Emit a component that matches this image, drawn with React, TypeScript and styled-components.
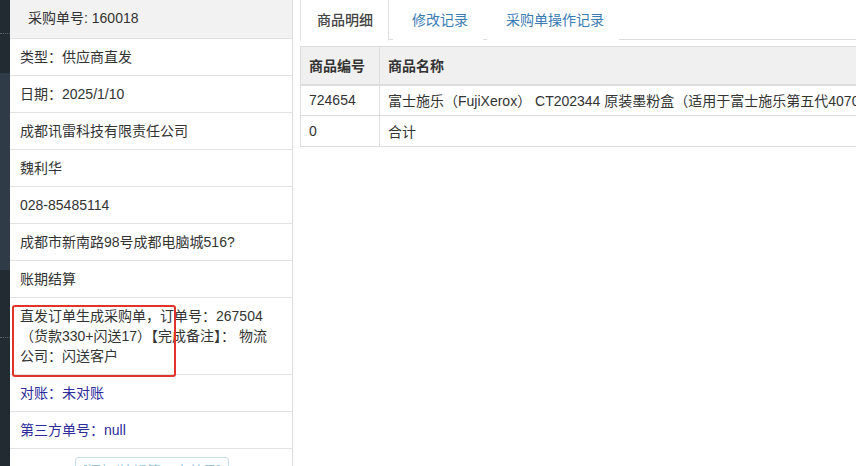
import React from "react";
import styled, { createGlobalStyle } from "styled-components";

const Global = createGlobalStyle`
  html, body { margin: 0; padding: 0; background: #fff; overflow: hidden; }
  body { font-family: "Liberation Sans", Arial, "Noto Sans CJK SC", sans-serif; font-size: 14px; color: #333; }
  * { box-sizing: border-box; }
`;

const Page = styled.div`
  display: flex;
  width: 856px;
  height: 466px;
  overflow: hidden;
`;

const Strip = styled.div`
  width: 10px;
  flex: none;
  display: flex;
  flex-direction: column;
`;

const StripSection = styled.div<{ $h?: number; $tone: "dark" | "slate"; $dotAt?: number }>`
  position: relative;
  height: ${(p) => (p.$h ? `${p.$h}px` : "auto")};
  flex: ${(p) => (p.$h ? "none" : "1")};
  background: ${(p) => (p.$tone === "dark" ? "#222a32" : "#2f3b47")};
  &::after {
    content: "";
    display: ${(p) => (p.$dotAt ? "block" : "none")};
    position: absolute;
    left: 0;
    right: 0;
    top: ${(p) => p.$dotAt || 0}px;
    border-top: 1px dotted #5a636c;
  }
`;

const LeftPanel = styled.div`
  position: relative;
  width: 283px;
  flex: none;
  border-right: 1px solid #dcdcdc;
  display: flex;
  flex-direction: column;
`;

const HeadRow = styled.div`
  flex: none;
  height: 39px;
  background: #f2f2f2;
  border-bottom: 1px solid #e2e2e2;
  padding: 0 18px 2px;
  display: flex;
  align-items: center;
  line-height: 20px;
`;

const InfoRow = styled.div<{ $blue?: boolean }>`
  flex: none;
  padding: 8px 10px 8px 10px;
  line-height: 20px;
  border-bottom: 1px solid #e2e2e2;
  color: ${(p) => (p.$blue ? "#2b2b9c" : "#333")};
  white-space: nowrap;
`;

const ButtonRow = styled.div`
  flex: none;
  padding: 8px 0 8px 65px;
`;

const LinkButton = styled.div`
  display: inline-block;
  padding: 3px 7px;
  border: 1px solid #c4dde6;
  border-radius: 3px;
  color: #9cc3d8;
  line-height: 20px;
`;

const Highlight = styled.div`
  position: absolute;
  left: 2px;
  top: 305px;
  width: 164px;
  height: 72px;
  border: 2px solid #e1322b;
  border-radius: 3px;
  pointer-events: none;
`;

const RightPanel = styled.div`
  flex: 1;
  min-width: 0;
  margin-left: 7px;
  display: flex;
  flex-direction: column;
`;

const TabBar = styled.div`
  display: flex;
  height: 40px;
  border-bottom: 1px solid #dddddd;
`;

const Tab = styled.div<{ $active?: boolean }>`
  height: 41px;
  margin-bottom: -1px;
  margin-left: ${(p) => (p.$active ? "0" : "4px")};
  padding: ${(p) => (p.$active ? "0 0 3px 16px" : "0 14px 3px 18px")};
  width: ${(p) => (p.$active ? "89px" : "auto")};
  display: flex;
  align-items: center;
  color: ${(p) => (p.$active ? "#444" : "#3a7bb4")};
  font-weight: ${(p) => (p.$active ? 500 : 400)};
  background: #fff;
  border: 1px solid ${(p) => (p.$active ? "#dddddd" : "transparent")};
  border-bottom-color: ${(p) => (p.$active ? "#fff" : "transparent")};
  border-top: none;
  white-space: nowrap;
`;

const TableWrap = styled.div`
  margin-top: 6px;
  overflow: hidden;
`;

const Table = styled.table`
  border-collapse: collapse;
  width: 700px;
  border: 1px solid #dddddd;
`;

const Th = styled.th<{ $w?: number }>`
  background: #f0f0f0;
  text-align: left;
  font-weight: 700;
  color: #333;
  height: 38px;
  padding: 0 8px;
  border: 1px solid #dddddd;
  border-bottom: 2px solid #dddddd;
  white-space: nowrap;
  width: ${(p) => (p.$w ? `${p.$w}px` : "auto")};
`;

const Td = styled.td`
  height: 31px;
  padding: 0 8px;
  border: 1px solid #dddddd;
  white-space: nowrap;
  color: #333;
`;

const rows = [
  "类型：供应商直发",
  "日期：2025/1/10",
  "成都讯雷科技有限责任公司",
  "魏利华",
  "028-85485114",
  "成都市新南路98号成都电脑城516?",
  "账期结算",
];

export default function App() {
  return (
    <>
      <Global />
      <Page>
        <Strip>
          <StripSection $h={73} $tone="dark" $dotAt={33} />
          <StripSection $h={197} $tone="slate" />
          <StripSection $tone="dark" $dotAt={67} />
        </Strip>
        <LeftPanel>
          <HeadRow>采购单号: 160018</HeadRow>
          {rows.map((r) => (
            <InfoRow key={r}>{r}</InfoRow>
          ))}
          <InfoRow>
            直发订单生成采购单，订单号：267504
            <br />
            （货款330+闪送17）【完成备注】： 物流
            <br />
            公司：闪送客户
          </InfoRow>
          <InfoRow $blue>对账：未对账</InfoRow>
          <InfoRow $blue>第三方单号：null</InfoRow>
          <ButtonRow>
            <LinkButton>[添加/编辑第三方单号]</LinkButton>
          </ButtonRow>
          <Highlight />
        </LeftPanel>
        <RightPanel>
          <TabBar>
            <Tab $active>商品明细</Tab>
            <Tab>修改记录</Tab>
            <Tab>采购单操作记录</Tab>
          </TabBar>
          <TableWrap>
            <Table>
              <thead>
                <tr>
                  <Th $w={79}>商品编号</Th>
                  <Th>商品名称</Th>
                </tr>
              </thead>
              <tbody>
                <tr>
                  <Td>724654</Td>
                  <Td>富士施乐（FujiXerox） CT202344 原装墨粉盒（适用于富士施乐第五代4070/5070）</Td>
                </tr>
                <tr>
                  <Td>0</Td>
                  <Td>合计</Td>
                </tr>
              </tbody>
            </Table>
          </TableWrap>
        </RightPanel>
      </Page>
    </>
  );
}
